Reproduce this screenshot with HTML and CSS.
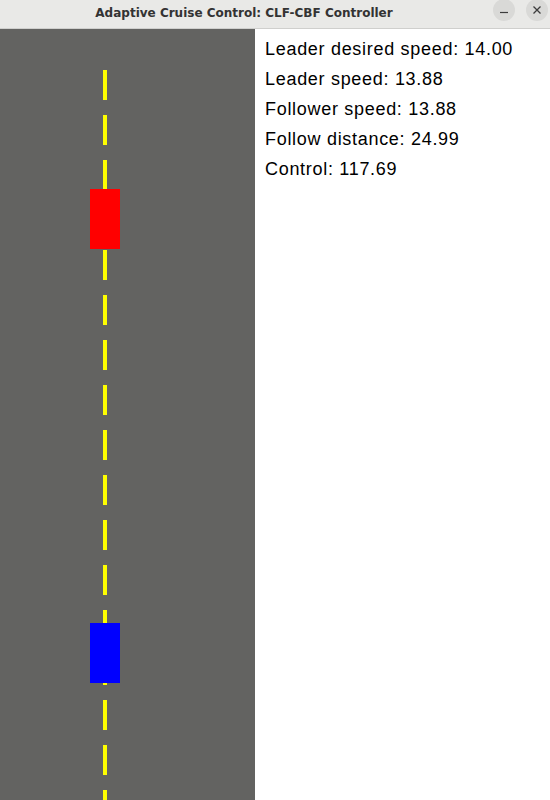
FILE: index.html
```html
<html>
<head>
    <title>Adaptive Cruise Control: CLF-CBF Controller</title>
    <link rel="stylesheet" href="styles.css">
</head>
<body>

<div class="titlebar">
    <span class="title">Adaptive Cruise Control: CLF-CBF Controller</span>
    <div class="buttons">
        <span class="winbtn">
            <svg width="10" height="10" viewBox="0 0 10 10"><line x1="1" y1="7.5" x2="9" y2="7.5" stroke="#3c3c3c" stroke-width="1.2"/></svg>
        </span>
        <span class="winbtn">
            <svg width="10" height="10" viewBox="0 0 10 10"><path d="M1.5 1.5 L8.5 8.5 M8.5 1.5 L1.5 8.5" stroke="#3c3c3c" stroke-width="1.3"/></svg>
        </span>
    </div>
</div>

<div class="main">
    <div class="road">
        <svg width="255" height="771" xmlns="http://www.w3.org/2000/svg">
            <rect x="0" y="0" width="255" height="771" fill="#636361"/>
            <!-- lane marking -->
            <line x1="105" y1="41" x2="105" y2="771" stroke="#ffff00" stroke-width="4" stroke-dasharray="30 15"/>
            <!-- leader -->
            <rect id="leader" x="90" y="160" width="30" height="60" fill="#ff0000"/>
            <!-- follower -->
            <rect id="follower" x="90" y="594" width="30" height="60" fill="#0000ff"/>
        </svg>
    </div>
    <div class="info">
        <div class="line">Leader desired speed: 14.00</div>
        <div class="line">Leader speed: 13.88</div>
        <div class="line">Follower speed: 13.88</div>
        <div class="line">Follow distance: 24.99</div>
        <div class="line">Control: 117.69</div>
    </div>
</div>

</body>
</html>
```

FILE: styles.css
```css
html, body {
    margin: 0;
    padding: 0;
    width: 550px;
    height: 800px;
    overflow: hidden;
    background: #ffffff;
}
.titlebar {
    height: 28px;
    border-bottom: 1px solid #cfcfcd;
    background: #e9e9e7;
    display: flex;
    align-items: center;
    justify-content: center;
    padding-right: 62px;
    position: relative;
}
.title {
    font-family: "DejaVu Sans", sans-serif;
    font-weight: bold;
    font-size: 12px;
    color: #333333;
    margin-top: -2px;
}
.buttons {
    position: absolute;
    right: 2px;
    top: -1px;
    display: flex;
    gap: 11px;
}
.winbtn {
    width: 22px;
    height: 22px;
    border-radius: 50%;
    background: #d9d9d7;
    display: flex;
    align-items: center;
    justify-content: center;
}
.main {
    display: flex;
    height: 771px;
}
.road {
    width: 255px;
    height: 771px;
}
.road svg {
    display: block;
}
.info {
    flex: 1;
    padding: 5px 0 0 10px;
    font-family: "Liberation Sans", Arial, sans-serif;
    font-size: 18px;
    letter-spacing: 0.7px;
    line-height: 30px;
    color: #000000;
}
```
